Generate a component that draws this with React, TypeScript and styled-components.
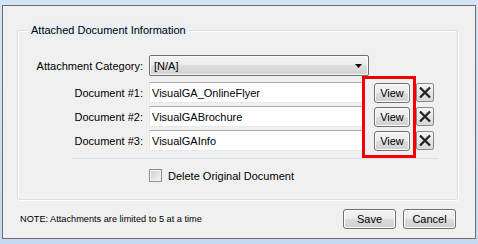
import styled, { createGlobalStyle } from "styled-components";

const GlobalStyle = createGlobalStyle`
  html, body {
    margin: 0;
    padding: 0;
  }
  body {
    background: #cddff2;
    font-family: "Liberation Sans", Arial, sans-serif;
    font-size: 11px;
    color: #000;
  }
`;

const Window = styled.div`
  width: 478px;
  height: 244px;
  box-sizing: border-box;
  padding: 5px 2px 0;
  background: linear-gradient(#d4e4f5, #c5daf0);
`;

const Panel = styled.div`
  width: 474px;
  height: 234px;
  box-sizing: border-box;
  border: 1px solid #6d6d6d;
  background: #f0f0f0;
  padding: 17px 17px 0 14px;
  display: flex;
  flex-direction: column;
`;

const Group = styled.fieldset`
  margin: 0;
  padding: 0 0 17px;
  min-width: 0;
  border: 1px solid #d5dfe5;
  border-radius: 3px;
  box-shadow: inset 1px 1px 0 #fff, 1px 1px 0 #fff;
`;

const Legend = styled.legend`
  margin-left: 10px;
  padding: 0 3px;
  line-height: 14px;
  background: #e9eff7;
`;

const Body = styled.div`
  padding-top: 18px;
  display: flex;
  flex-direction: column;
`;

const Row = styled.div`
  display: flex;
  align-items: center;
  height: 21px;
`;

const Label = styled.div`
  flex: 0 0 125px;
  margin-right: 6px;
  text-align: right;
  white-space: nowrap;
`;

const Combo = styled.div`
  width: 220px;
  height: 21px;
  box-sizing: border-box;
  display: flex;
  align-items: center;
  justify-content: space-between;
  padding: 0 6px 0 4px;
  border: 1px solid #707070;
  border-radius: 2px;
  background: linear-gradient(#f3f3f3 0%, #ececec 50%, #dedede 50%, #d2d2d2 100%);
  box-shadow: inset 0 0 0 1px #fafafa;
`;

const DocList = styled.div`
  position: relative;
  margin-top: 6px;
  display: flex;
  flex-direction: column;
  gap: 3px;
`;

const TextBox = styled.input`
  width: 215px;
  height: 21px;
  box-sizing: border-box;
  margin: 0;
  padding: 0 0 0 2px;
  font: inherit;
  font-size: 11px;
  color: #000;
  background: #fff;
  border: 1px solid;
  border-color: #abadb3 #dbdfe6 #e3e9ef #e2e3ea;
  outline: none;
`;

const Button = styled.button<{ $w: number }>`
  width: ${(p) => p.$w}px;
  height: 20px;
  margin: 0;
  padding: 0;
  font: inherit;
  font-size: 11px;
  color: #000;
  border: 1px solid #707070;
  border-radius: 3px;
  background: linear-gradient(#f2f2f2 0%, #ebebeb 50%, #dddddd 50%, #cfcfcf 100%);
  box-shadow: inset 0 0 0 1px #fcfcfc;
`;

const ViewButton = styled(Button)`
  margin-left: 10px;
`;

const RemoveButton = styled.button`
  width: 18px;
  height: 19px;
  margin: 0 0 0 6px;
  padding: 0;
  display: flex;
  align-items: center;
  justify-content: center;
  border: 1px solid #8a8a8a;
  border-radius: 2px;
  background: linear-gradient(#f4f4f4, #d6d6d6);
`;

const Highlight = styled.div`
  position: absolute;
  left: 344px;
  top: -6px;
  width: 54px;
  height: 82px;
  box-sizing: border-box;
  border: 3px solid #f40000;
  pointer-events: none;
`;

const Separator = styled.div`
  margin: 7px 0 0 54px;
  width: 366px;
  height: 1px;
  background: #d5dfe8;
`;

const CheckRow = styled.label`
  display: flex;
  align-items: center;
  margin-top: 10px;
  padding-left: 131px;
  height: 13px;
`;

const CheckBox = styled.span`
  width: 13px;
  height: 13px;
  box-sizing: border-box;
  margin-right: 6px;
  border: 1px solid #8e8f8f;
  background: linear-gradient(135deg, #cbcfd5, #f6f6f6);
  box-shadow: inset 0 0 0 1px #f4f4f4;
`;

const Footer = styled.div`
  margin-top: 9px;
  display: flex;
  align-items: center;
  padding: 0 2px 0 3px;
`;

const Note = styled.div`
  flex: 1;
  font-size: 9.2px;
`;

const Actions = styled.div`
  display: flex;
  gap: 7px;
`;

const docs = ["VisualGA_OnlineFlyer", "VisualGABrochure", "VisualGAInfo"];

function DropArrow() {
  return (
    <svg width="7" height="4" viewBox="0 0 7 4">
      <polygon points="0,0 7,0 3.5,4" fill="#000" />
    </svg>
  );
}

function RemoveIcon() {
  return (
    <svg width="14" height="13" viewBox="0 0 14 13">
      <path d="M2 1.5 L12 11.5 M12 1.5 L2 11.5" stroke="#222" strokeWidth="2.3" />
    </svg>
  );
}

export default function App() {
  return (
    <>
      <GlobalStyle />
      <Window>
        <Panel>
          <Group>
            <Legend>Attached Document Information</Legend>
            <Body>
              <Row>
                <Label>Attachment Category:</Label>
                <Combo>
                  <span>[N/A]</span>
                  <DropArrow />
                </Combo>
              </Row>
              <DocList>
                {docs.map((name, i) => (
                  <Row key={name}>
                    <Label>Document #{i + 1}:</Label>
                    <TextBox readOnly defaultValue={name} />
                    <ViewButton $w={36}>View</ViewButton>
                    <RemoveButton>
                      <RemoveIcon />
                    </RemoveButton>
                  </Row>
                ))}
                <Highlight />
              </DocList>
              <Separator />
              <CheckRow>
                <CheckBox />
                Delete Original Document
              </CheckRow>
            </Body>
          </Group>
          <Footer>
            <Note>NOTE: Attachments are limited to 5 at a time</Note>
            <Actions>
              <Button $w={53}>Save</Button>
              <Button $w={53}>Cancel</Button>
            </Actions>
          </Footer>
        </Panel>
      </Window>
    </>
  );
}
